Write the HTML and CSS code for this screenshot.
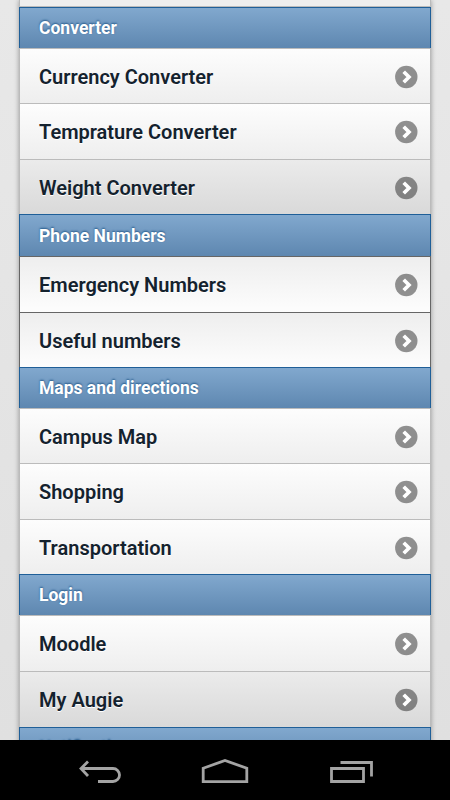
FILE: index.html
```
<!DOCTYPE html>
<html lang="en">
<head>
<meta charset="utf-8">
<title>Directory</title>
<link rel="stylesheet" href="styles.css">
</head>
<body>
<svg class="defs" aria-hidden="true"><symbol id="chevron" viewBox="0 0 24 24"><circle cx="12.3" cy="12" r="11.2" fill="#000" fill-opacity=".42"/><path d="M9.7 6.7l5.3 5.3-5.3 5.3" fill="none" stroke="#fff" stroke-width="3.7"/></symbol></svg>
<main class="page">
<ul class="list">
<li class="previous"></li>
<li class="divider">Converter</li>
<li class="item">Currency Converter<svg><use href="#chevron"/></svg></li>
<li class="item tall">Temprature Converter<svg><use href="#chevron"/></svg></li>
<li class="item shaded">Weight Converter<svg><use href="#chevron"/></svg></li>
<li class="divider tall">Phone Numbers</li>
<li class="item outlined tall">Emergency Numbers<svg><use href="#chevron"/></svg></li>
<li class="item outlined">Useful numbers<svg><use href="#chevron"/></svg></li>
<li class="divider">Maps and directions</li>
<li class="item">Campus Map<svg><use href="#chevron"/></svg></li>
<li class="item tall">Shopping<svg><use href="#chevron"/></svg></li>
<li class="item">Transportation<svg><use href="#chevron"/></svg></li>
<li class="divider">Login</li>
<li class="item tall">Moodle<svg><use href="#chevron"/></svg></li>
<li class="item shaded tall">My Augie<svg><use href="#chevron"/></svg></li>
<li class="divider">Notifications</li>
</ul>
</main>
<nav class="navbar">
<svg width="44" height="26" viewBox="0 0 44 26"><path d="M2.5 10.5h32.5a6.5 6.5 0 0 1 0 13H20M10 3.5L3 10.5l7 7.5" /></svg>
<svg width="48" height="28" viewBox="0 0 48 28"><path d="M2.2 10.2L24 2.5l21.8 7.7v13.4H2.2z"/></svg>
<svg width="46" height="26" viewBox="0 0 46 26"><path d="M3.5 10.5h32v13h-32zM12.5 4.5h31V18.5"/></svg>
</nav>
</body>
</html>
```

FILE: styles.css
```
* { box-sizing: border-box; }
body {
  margin: 0;
  width: 450px;
  height: 800px;
  overflow: hidden;
  background: #000;
  font-family: Roboto, sans-serif;
}
.defs { display: none; }
.page {
  height: 740px;
  overflow: hidden;
  padding: 0 19px;
  background: linear-gradient(#e8e8e8, #e0e0e0);
}
.list {
  list-style: none;
  margin: 0;
  padding: 0;
  width: 412px;
  box-shadow: 0 0 5px rgba(0, 0, 0, .35);
}
.previous {
  height: 7px;
  background: #eee;
  border: solid #bbb;
  border-width: 0 1px 1px;
}
.divider {
  height: 41px;
  display: flex;
  align-items: center;
  padding: 0 19px 1px;
  border: solid #1f5f98;
  border-width: 1px 1px 0;
  background: linear-gradient(#81a8ce, #5e87b0);
  color: #fff;
  font-size: 17.5px;
  font-weight: 700;
  text-shadow: 0 -1px 2px #245a8c;
}
.divider.tall { height: 42px; padding-bottom: 0; }
.item {
  height: 55px;
  display: flex;
  align-items: center;
  justify-content: space-between;
  padding: 1px 12px 0 19px;
  border: solid #bbb;
  border-width: 1px 1px 0;
  background: linear-gradient(#fdfdfd, #eee);
  color: #14222e;
  font-size: 20px;
  font-weight: 600;
  text-shadow: 0 1px 0 #fff;
}
.item.tall { height: 56px; }
.item.shaded { background: linear-gradient(#ebebeb, #d9d9d9); }
.item.outlined {
  border-color: #666;
  background: linear-gradient(#eee, #fdfdfd);
}
.item svg { width: 24px; height: 24px; }
.navbar {
  height: 60px;
  display: flex;
  justify-content: space-between;
  padding: 18px 76px 0 78px;
}
.navbar path { fill: none; stroke: #a4a4a4; stroke-width: 2.8; }
```
